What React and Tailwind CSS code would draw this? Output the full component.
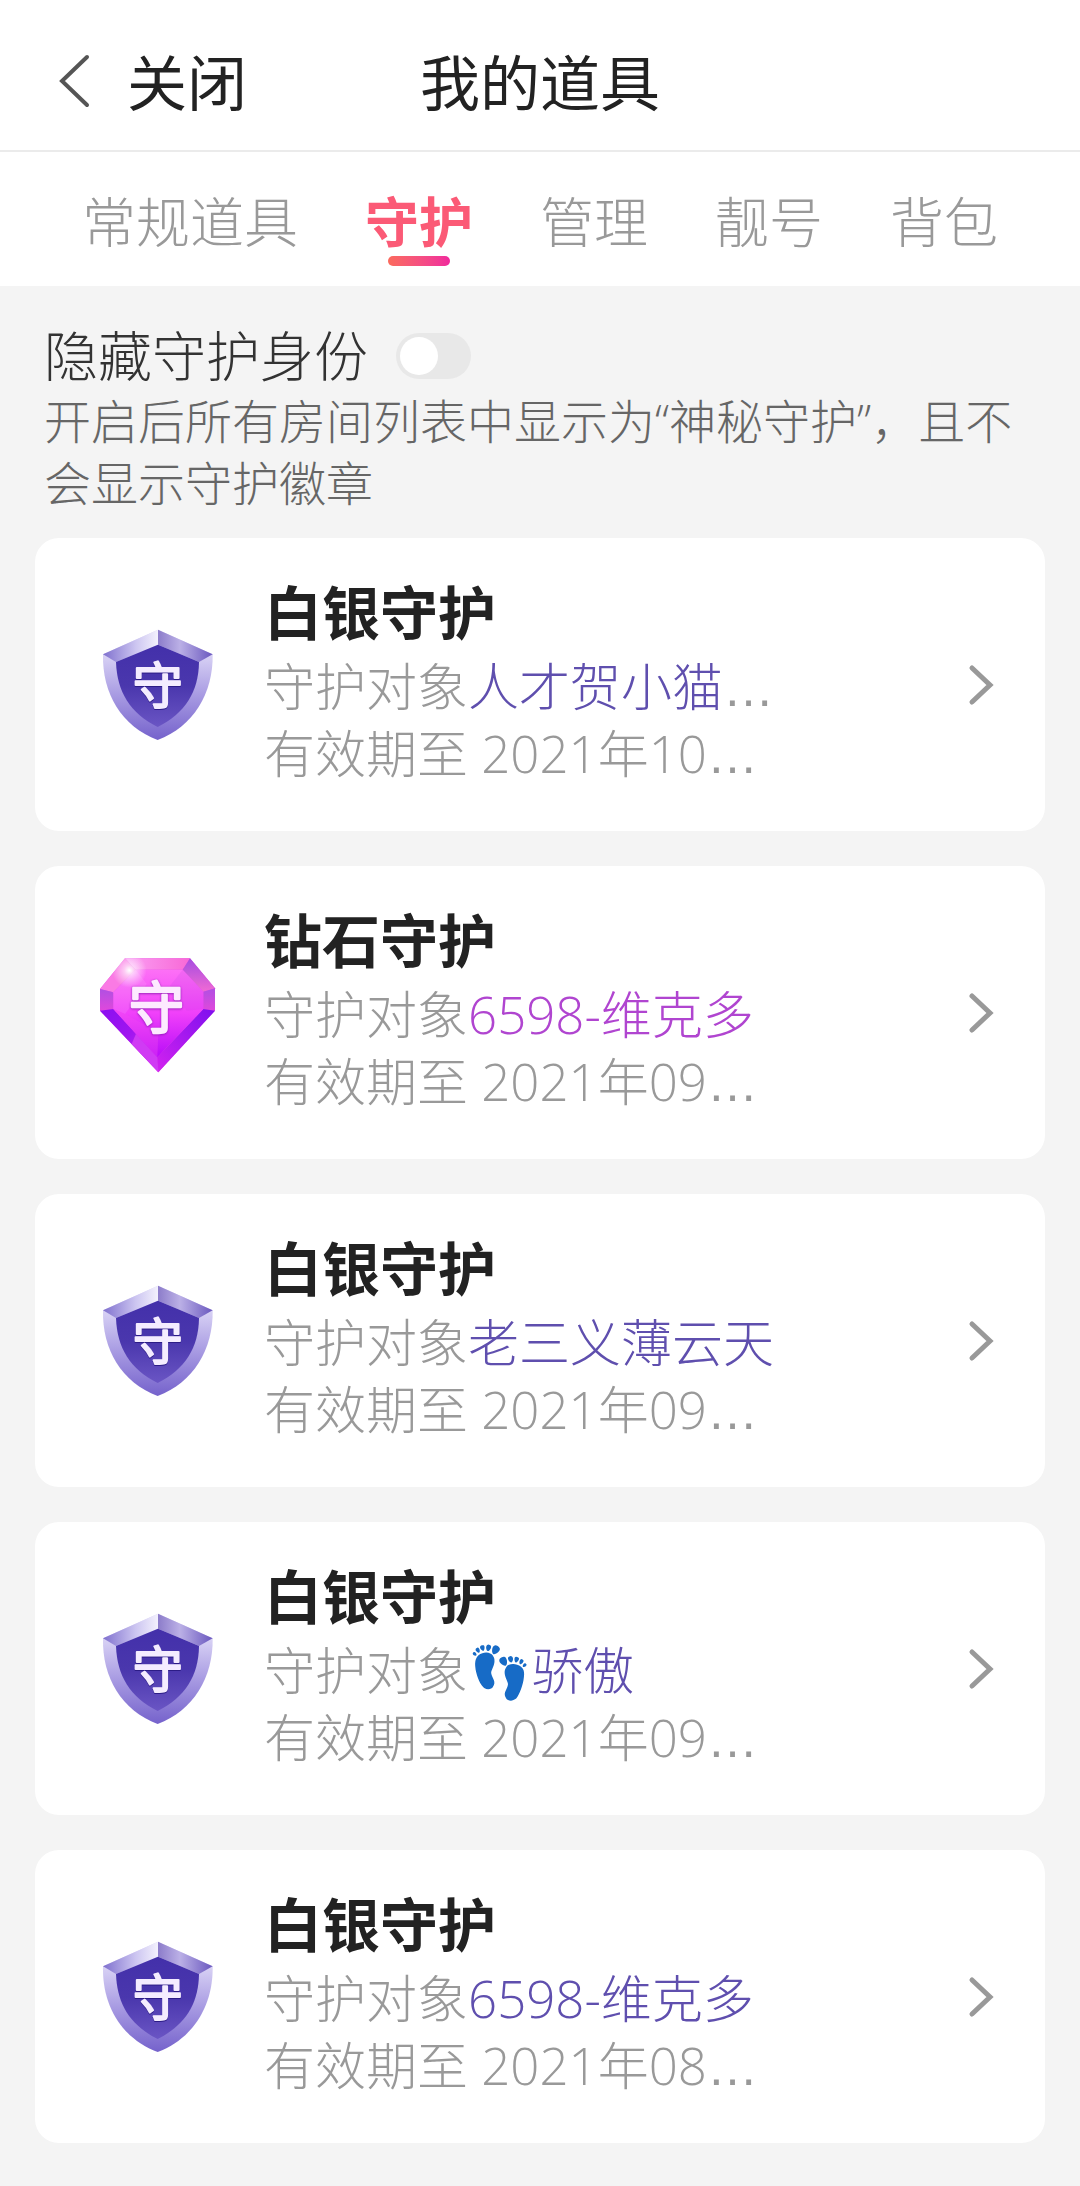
import { useState } from 'react';

const tabs = ['常规道具', '守护', '管理', '靓号', '背包'];

const guards = [
  { id: 1, level: 'silver', title: '白银守护', target: '人才贺小猫', cut: true, expires: '2021年10' },
  { id: 2, level: 'diamond', title: '钻石守护', target: '6598-维克多', expires: '2021年09' },
  { id: 3, level: 'silver', title: '白银守护', target: '老三义薄云天', expires: '2021年09' },
  { id: 4, level: 'silver', title: '白银守护', target: '👣骄傲', expires: '2021年09' },
  { id: 5, level: 'silver', title: '白银守护', target: '6598-维克多', expires: '2021年08' },
];

function SilverBadge() {
  return (
    <svg viewBox="0 0 450 450" className="w-[150px] h-[150px] shrink-0" aria-hidden="true">
      <defs>
        <linearGradient id="silverSide" x1="0" y1="0" x2="0" y2="1">
          <stop offset="0.2" stopColor="#dcd6f6" />
          <stop offset="0.6" stopColor="#a79ae2" />
          <stop offset="1" stopColor="#7562cc" />
        </linearGradient>
        <linearGradient id="silverTopLeft" x1="0" y1="0" x2="1" y2="0">
          <stop offset="0" stopColor="#7f70ce" />
          <stop offset="0.6" stopColor="#cdc6f1" />
          <stop offset="1" stopColor="#f3f1fd" />
        </linearGradient>
        <linearGradient id="silverTopRight" x1="0" y1="0" x2="1" y2="0">
          <stop offset="0" stopColor="#8c7cca" />
          <stop offset="0.4" stopColor="#bbb0e6" />
          <stop offset="1" stopColor="#6a58bf" />
        </linearGradient>
        <linearGradient id="silverCore" x1="0" y1="0" x2="0" y2="1">
          <stop offset="0" stopColor="#4330aa" />
          <stop offset="0.5" stopColor="#4a37ad" />
          <stop offset="1" stopColor="#6a55c4" />
        </linearGradient>
      </defs>
      <path d="M69 133 L234 59 L398 133 C400 250 340 350 233 390 C125 350 66 250 69 133Z" fill="url(#silverSide)" />
      <path d="M69 133 L234 59 V104 L108 156Z" fill="url(#silverTopLeft)" />
      <path d="M398 133 L234 59 V104 L357 156Z" fill="url(#silverTopRight)" />
      <path d="M108 156 L234 104 L357 156 C356 245 315 310 233 351 C150 310 111 245 108 156Z" fill="url(#silverCore)" />
      <text
        x="233" y="281" textAnchor="middle" fontSize="150" fontWeight="400"
        fill="#f4ecff" stroke="#f4ecff" strokeWidth="6" strokeLinejoin="round"
        className="drop-shadow-[0_3px_2px_#2c1c86]"
      >
        守
      </text>
    </svg>
  );
}

function DiamondBadge() {
  return (
    <svg viewBox="0 7 450 450" className="w-[150px] h-[150px] shrink-0" aria-hidden="true">
      <defs>
        <linearGradient id="gemTop" x1="0" y1="0" x2="1" y2="0">
          <stop offset="0" stopColor="#fba0f4" />
          <stop offset="1" stopColor="#f868d6" />
        </linearGradient>
        <linearGradient id="gemRight" x1="0" y1="0" x2="0" y2="1">
          <stop offset="0" stopColor="#a54ce0" />
          <stop offset="1" stopColor="#f06ad4" />
        </linearGradient>
        <linearGradient id="gemSide" x1="0" y1="0" x2="0" y2="1">
          <stop offset="0" stopColor="#b050e2" />
          <stop offset="1" stopColor="#e048dc" />
        </linearGradient>
        <linearGradient id="gemLowLeft" x1="0" y1="0" x2="1" y2="1">
          <stop offset="0" stopColor="#8a0ff0" />
          <stop offset="0.45" stopColor="#a015f0" />
          <stop offset="1" stopColor="#e23af0" />
        </linearGradient>
        <linearGradient id="gemLowRight" x1="1" y1="0" x2="0" y2="1">
          <stop offset="0" stopColor="#7d10ee" />
          <stop offset="1" stopColor="#d322f0" />
        </linearGradient>
        <linearGradient id="gemCore" x1="0" y1="0" x2="0" y2="1">
          <stop offset="0" stopColor="#fd70f6" />
          <stop offset="0.5" stopColor="#f040fa" />
          <stop offset="1" stopColor="#b80cf8" />
        </linearGradient>
        <radialGradient id="gemShine">
          <stop offset="0" stopColor="#fff" />
          <stop offset="0.3" stopColor="#fff" stopOpacity="0.6" />
          <stop offset="1" stopColor="#fff" stopOpacity="0" />
        </radialGradient>
      </defs>
      <path d="M135 68 H330 L405 158 V225 L235 410 L60 225 V160Z" fill="#e04ae6" />
      <path d="M135 68 H330 L308 102 H167Z" fill="url(#gemTop)" />
      <path d="M135 68 L167 102 L100 170 L60 160Z" fill="#fa7ae4" />
      <path d="M330 68 L405 158 L370 168 L308 102Z" fill="url(#gemRight)" />
      <path d="M60 160 L100 170 V220 L60 225Z" fill="url(#gemSide)" />
      <path d="M405 158 L370 168 V220 L405 225Z" fill="url(#gemSide)" />
      <path d="M60 225 L100 220 L232 365 L235 410Z" fill="url(#gemLowLeft)" />
      <path d="M155 325 L168 294 L232 365 L235 410Z" fill="#d03bf4" />
      <path d="M405 225 L370 220 L232 365 L235 410Z" fill="url(#gemLowRight)" />
      <path d="M167 102 H308 L370 168 V220 L232 365 L100 220 V170Z" fill="url(#gemCore)" />
      <path d="M100 170 L167 102 L200 145 L135 235 L100 220Z" fill="#fff" opacity="0.1" />
      <path d="M135 235 L235 290 L232 365 L100 220Z" fill="#f04bf0" opacity="0.35" />
      <path d="M370 168 L308 102 L270 150 L320 225 L370 220Z" fill="#b23be0" opacity="0.15" />
      <circle cx="148" cy="104" r="52" fill="url(#gemShine)" />
      <text
        x="229" y="278" textAnchor="middle" fontSize="166" fontWeight="400"
        fill="#fdeaff" stroke="#fdeaff" strokeWidth="7" strokeLinejoin="round"
        className="drop-shadow-[0_2px_3px_#8a1ab0]"
      >
        守
      </text>
    </svg>
  );
}

function Ellipsis() {
  return <span className="font-['Liberation_Sans',sans-serif] leading-none">…</span>;
}

function GuardCard({ guard }) {
  const isDiamond = guard.level === 'diamond';

  return (
    <a href="#guard" className="flex items-center bg-white rounded-3xl pl-[45px] pr-[50px]">
      {isDiamond ? <DiamondBadge /> : <SilverBadge />}
      <div className="flex-1 min-w-0 ml-[34px] pt-[35px] pb-11 whitespace-nowrap">
        <h2 className="text-[58px] leading-[80px] font-bold text-[#222]">{guard.title}</h2>
        <div className="text-[51px] leading-[67px] font-light text-[#999]">
          <p>
            守护对象
            <span className={isDiamond ? 'text-[#b045d0]' : 'text-[#5f4fae]'}>{guard.target}</span>
            {guard.cut && <Ellipsis />}
          </p>
          <p>
            有效期至 {guard.expires}
            <Ellipsis />
          </p>
        </div>
      </div>
      <svg viewBox="0 0 28 44" className="w-7 h-11 shrink-0" fill="none" stroke="#999" strokeWidth="5" strokeLinecap="round" aria-hidden="true">
        <path d="M5 5 L23 22 L5 39" />
      </svg>
    </a>
  );
}

export default function App() {
  const [active, setActive] = useState('守护');
  const [hidden, setHidden] = useState(false);

  return (
    <div className="min-h-screen bg-[#f4f4f4] font-['Open_Sans','Noto_Sans_CJK_SC',sans-serif]" lang="zh-CN">
      {/* Header */}
      <header className="grid grid-cols-[1fr_auto_1fr] items-center bg-white border-b-2 border-[#ebebeb] pt-6 pb-2 px-[57px]">
        <button className="flex items-center gap-9 text-[60px] leading-[118px] text-[#222]">
          <svg viewBox="0 0 34 56" className="w-[34px] h-14 mb-1" fill="none" stroke="#555" strokeWidth="4" strokeLinecap="round" aria-hidden="true">
            <path d="M30 4 L5 28 L30 52" />
          </svg>
          关闭
        </button>
        <h1 className="text-[60px] leading-[118px] text-[#222]">我的道具</h1>
      </header>

      {/* Tabs */}
      <nav className="flex justify-between bg-white px-[82px] pt-8 pb-5 font-['Noto_Sans_CJK_SC',sans-serif]">
        {tabs.map((tab) => (
          <button
            key={tab}
            onClick={() => setActive(tab)}
            className={`flex flex-col items-center text-[54px] leading-[72px] ${
              tab === active ? 'font-bold text-[#fb5a76]' : 'font-light text-[#999]'
            }`}
          >
            {tab}
            {tab === active && <span className="w-[62px] h-2.5 rounded-full bg-gradient-to-r from-[#fb6a5c] to-[#f0289c]" />}
          </button>
        ))}
      </nav>

      {/* Hide identity */}
      <section className="px-11 pt-9">
        <label className="flex items-center gap-7 text-[54px] leading-[68px] font-light text-[#333]">
          隐藏守护身份
          <input
            type="checkbox"
            role="switch"
            checked={hidden}
            onChange={() => setHidden(!hidden)}
            className="appearance-none flex items-center w-[75px] h-[46px] px-1 rounded-full bg-[#e8e8e8] checked:bg-[#fb5a76] checked:justify-end before:content-[''] before:w-[38px] before:h-[38px] before:rounded-full before:bg-white"
          />
        </label>
        <p className="text-[47px] leading-[62px] font-light text-[#666]">
          开启后所有房间列表中显示为“神秘守护”，且不会显示守护徽章
        </p>
      </section>

      {/* Guard list */}
      <ul className="flex flex-col gap-[35px] px-[35px] pt-6 pb-10">
        {guards.map((guard) => (
          <li key={guard.id}>
            <GuardCard guard={guard} />
          </li>
        ))}
      </ul>
    </div>
  );
}
